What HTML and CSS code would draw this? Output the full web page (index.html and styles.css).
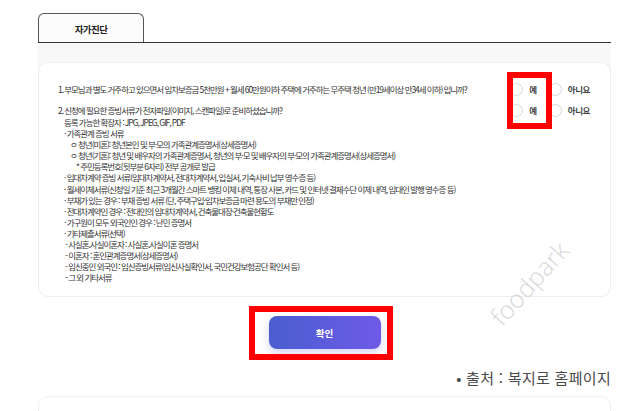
FILE: index.html
```html
<!DOCTYPE html>
<html lang="ko">
<head>
  <meta charset="UTF-8" />
  <title>자가진단</title>
  <link rel="stylesheet" href="styles.css">
</head>
<body>

<div class="page">

  <div class="tabs">
    <div class="tab active">자가진단</div>
  </div>

  <div class="panel">
    <div class="card">

      <div class="question">
        <p class="q-text">1. 부모님과 별도 거주하고 있으면서 임차보증금 5천만원 + 월세 60만원이하 주택에 거주하는 무주택 청년 (만19세이상 만34세 이하) 입니까?</p>
        <div class="options">
          <label class="opt"><span class="radio"></span>예</label>
          <label class="opt"><span class="radio"></span>아니요</label>
        </div>
      </div>

      <div class="question second">
        <p class="q-text">2. 신청에 필요한 증빙서류가 전자파일(이미지, 스캔파일)로 준비하셨습니까?</p>
        <div class="options">
          <label class="opt"><span class="radio"></span>예</label>
          <label class="opt"><span class="radio"></span>아니요</label>
        </div>
      </div>

      <ul class="docs">
        <li class="lv1">등록 가능한 확장자 : JPG, JPEG, GIF, PDF</li>
        <li class="lv1">· 가족관계 증빙 서류</li>
        <li class="lv2">ㅇ 청년(미혼): 청년본인 및 부·모의 가족관계증명서(상세증명서)</li>
        <li class="lv2">ㅇ 청년(기혼): 청년 및 배우자의 가족관계증명서, 청년의 부·모 및 배우자의 부·모의 가족관계증명서(상세증명서)</li>
        <li class="lv3">* 주민등록번호(뒷부분 6자리) 전부 공개로 발급</li>
        <li class="lv1">· 임대차계약 증빙 서류(임대차계약서, 전대차계약서, 입실서, 기숙사비 납부 영수증 등)</li>
        <li class="lv1">· 월세이체서류(신청일 기준 최근 3개월간 스마트 뱅킹 이체 내역, 통장 사본, 카드 및 인터넷 결제수단 이체 내역, 임대인 발행 영수증 등)</li>
        <li class="lv1">· 부채가 있는 경우 : 부채 증빙 서류 (단, 주택구입·임차보증금 마련 용도의 부채만 인정)</li>
        <li class="lv1">· 전대차계약인 경우 : 전대인의 임대차계약서, 건축물대장·건축물현황도</li>
        <li class="lv1">· 가구원이 모두 외국인인 경우 : 난민 증명서</li>
        <li class="lv1">· 기타제출서류(선택)</li>
        <li class="lv1b">- 사실혼.사실이혼자 : 사실혼.사실이혼 증명서</li>
        <li class="lv1b">- 이혼자 : 혼인관계증명서(상세증명서)</li>
        <li class="lv1b">- 임신중인 외국인 : 임신증빙서류(임신사실확인서, 국민건강보험공단 확인서 등)</li>
        <li class="lv1b">- 그 외 기타서류</li>
      </ul>

    </div>
  </div>

  <div class="actions">
    <button class="confirm">확인</button>
  </div>

  <p class="source">• 출처 : 복지로 홈페이지</p>

  <div class="next-card"></div>

  <span class="watermark">foodpark</span>
  <span class="mark mark-radio"></span>
  <span class="mark mark-button"></span>
</div>

</body>
</html>
```

FILE: styles.css
```css
body {
  margin: 0;
  background: #fff;
  font-family: "Noto Sans CJK KR", "Noto Sans", sans-serif;
  color: #333;
}

.page {
  position: relative;
  width: 573px;
  padding: 13px 0 0 38px;
  height: 398px;
  overflow: hidden;
}

/* tab bar */
.tabs {
  display: flex;
  border-bottom: 1px solid #333;
}

.tab {
  width: 104px;
  height: 28px;
  line-height: 30px;
  text-align: center;
  font-size: 9.5px;
  font-weight: 700;
  letter-spacing: -0.6px;
  color: #222;
  border: 1px solid #555;
  border-bottom: none;
  border-radius: 6px 6px 0 0;
  background: #fcfcfc;
}

/* gray strip behind the card top */
.panel {
  background: linear-gradient(#f8f8f8 30px, #fff 30px);
  padding-top: 19px;
}

.card {
  background: #fff;
  border: 1px solid #efefef;
  border-radius: 10px;
  padding: 20px 20px 13px 19px;
  font-size: 8.5px;
  letter-spacing: -1.05px;
  line-height: 11.1px;
  color: #333;
}

.question {
  display: flex;
  justify-content: space-between;
  align-items: center;
}

.question.second {
  margin-top: 8px;
}

.q-text {
  margin: 0;
  white-space: nowrap;
}

.options {
  display: flex;
  flex-shrink: 0;
  gap: 12px;
  white-space: nowrap;
  letter-spacing: -0.4px;
}

.opt {
  display: flex;
  align-items: center;
  gap: 6px;
  font-weight: 700;
  color: #444;
}

.radio {
  width: 11px;
  height: 11px;
  border: 1px solid #d6d6d6;
  border-radius: 50%;
  background: #fff;
}

.docs {
  list-style: none;
  margin: 0;
  padding: 0;
  white-space: nowrap;
}

.lv1 { padding-left: 6px; }
.lv1b { padding-left: 7px; }
.lv2 { padding-left: 12px; }
.lv3 { padding-left: 18px; }

/* confirm button */
.actions {
  display: flex;
  justify-content: center;
  margin-top: 19px;
}

.confirm {
  width: 112px;
  height: 33px;
  border: none;
  border-radius: 8px;
  background: linear-gradient(90deg, #4a5ed0, #6e5ae6);
  box-shadow: 0 4px 8px rgba(90, 90, 220, 0.25);
  color: #fff;
  font-family: inherit;
  font-size: 9.5px;
  font-weight: 700;
  cursor: pointer;
}

.source {
  margin: 20px 0 0;
  text-align: right;
  font-size: 15px;
  line-height: 18px;
  letter-spacing: 0.3px;
  color: #4a4a4a;
}

.next-card {
  margin-top: 9px;
  height: 40px;
  border: 1px solid #efefef;
  border-radius: 10px;
}

.watermark {
  position: absolute;
  left: 478px;
  top: 266px;
  font-family: "Open Sans", sans-serif;
  font-weight: 300;
  font-size: 25px;
  color: #d8d8d8;
  transform: rotate(-48deg);
}

/* red annotation boxes */
.mark {
  position: absolute;
  border: 6px solid #ff0000;
  box-sizing: border-box;
}

.mark-radio {
  left: 507px;
  top: 72px;
  width: 45px;
  height: 57px;
}

.mark-button {
  left: 249px;
  top: 306px;
  width: 144px;
  height: 54px;
}
```
